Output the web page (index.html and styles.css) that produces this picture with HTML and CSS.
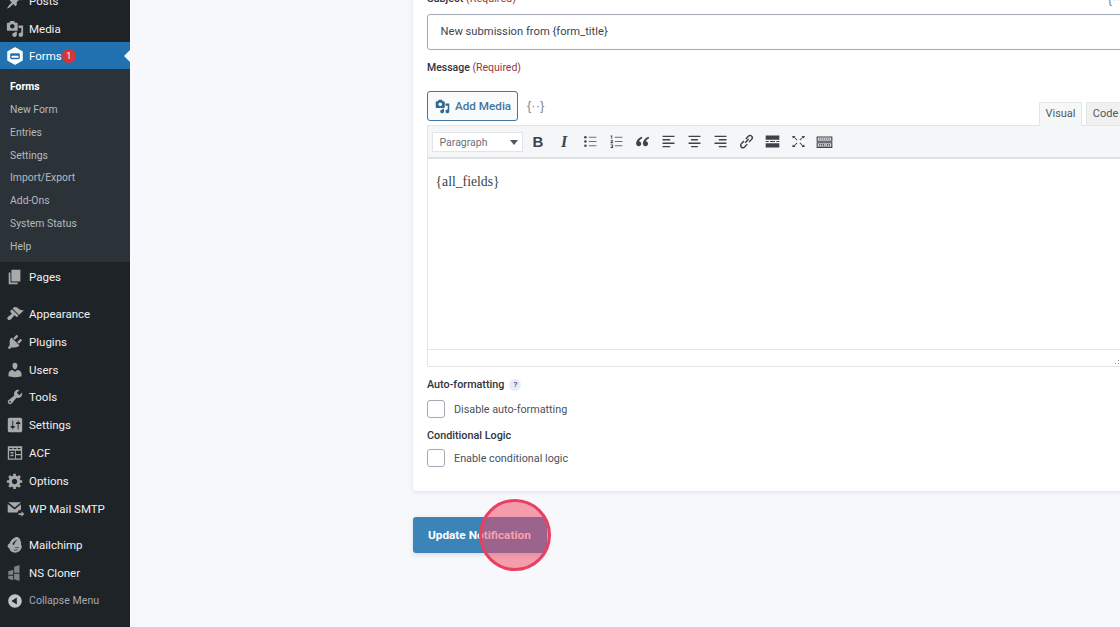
FILE: index.html
```html
<!DOCTYPE html>
<html lang="en">
<head>
<meta charset="utf-8">
<title>Edit notification</title>
<link rel="stylesheet" href="styles.css">
</head>
<body>
<div class="app">
  <nav class="sidebar">
    <ul class="menu">
      <li class="item"><svg class="ico" viewBox="0 0 20 20"><path d="M10.44 3.02l1.82-1.82 6.36 6.35-1.83 1.82c-1.05-.68-2.48-.57-3.41.36l-.75.75c-.92.93-1.04 2.35-.35 3.41l-1.83 1.82-2.41-2.41-2.8 2.79c-.42.42-3.38 2.71-3.8 2.29s1.86-3.39 2.28-3.81l2.79-2.79L4.1 9.36l1.83-1.82c1.05.69 2.48.57 3.4-.36l.75-.75c.93-.92 1.05-2.35.36-3.41z"/></svg>Posts</li>
      <li class="item"><svg class="ico" viewBox="0 0 20 20"><path fill-rule="evenodd" d="M13 11V4c0-.55-.45-1-1-1h-1.67L9 1H5L3.67 3H2c-.55 0-1 .45-1 1v7c0 .55.45 1 1 1h10c.55 0 1-.45 1-1zM7 4.5c1.38 0 2.5 1.12 2.5 2.5S8.38 9.5 7 9.5 4.5 8.38 4.5 7 5.62 4.5 7 4.5zM14 6h5v10.5c0 1.38-1.12 2.5-2.5 2.5S14 17.88 14 16.5s1.12-2.5 2.5-2.5c.17 0 .34.02.5.05V9h-3V6zm-4 8.05V13h2v3.5c0 1.38-1.12 2.5-2.5 2.5S7 17.88 7 16.5 8.12 14 9.5 14c.17 0 .34.02.5.05z"/></svg>Media</li>
      <li class="item active">
        <svg class="ico ico-forms" viewBox="0 0 20 20"><path d="M10 1l7.8 4.4v9.2L10 19l-7.8-4.4V5.4z" stroke="#fff" stroke-width="1.6" stroke-linejoin="round"/><rect x="4.6" y="7" width="10.8" height="6.6" rx="1.6" fill="#2271b1"/><rect x="6.2" y="9.6" width="7.6" height="2.4" rx=".6" fill="#fff"/></svg>Forms<span class="badge">1</span>
      </li>
      <li>
        <ul class="submenu">
          <li class="sub current">Forms</li>
          <li class="sub">New Form</li>
          <li class="sub">Entries</li>
          <li class="sub">Settings</li>
          <li class="sub">Import/Export</li>
          <li class="sub">Add-Ons</li>
          <li class="sub">System Status</li>
          <li class="sub">Help</li>
        </ul>
      </li>
      <li class="item"><svg class="ico" viewBox="0 0 20 20"><path d="M6 15V2h10v13H6zm-1 1h8v2H3V5h2v11z"/></svg>Pages</li>
      <li class="item gap"><svg class="ico" viewBox="0 0 20 20"><path d="M14.48 11.06L7.41 3.99l1.5-1.5c.5-.56 2.3-.47 3.51.32 1.21.8 1.43 1.28 2.91 2.1 1.18.64 2.45 1.26 4.45.85zm-.71.71L6.7 4.7 4.93 6.47c-.39.39-.39 1.02 0 1.41l1.06 1.06c.39.39.39 1.03 0 1.42-.6.6-1.43 1.11-2.21 1.69-.35.26-.7.53-1.01.84C1.43 13.23.91 14.96 2 16.06c1.1 1.09 2.83.57 4.18-.77.31-.31.58-.66.84-1.01.58-.78 1.09-1.61 1.69-2.21.39-.39 1.03-.39 1.42 0l1.06 1.06c.39.39 1.02.39 1.41 0z"/></svg>Appearance</li>
      <li class="item"><svg class="ico" viewBox="0 0 20 20"><path d="M13.11 4.36L9.87 7.6 8 5.73l3.24-3.24c.35-.34 1.05-.2 1.56.32.52.51.66 1.21.31 1.55zm-8 1.77l.91-1.12 9.01 9.01-1.19.84c-.71.71-2.63 1.16-3.82 1.16H6.14L4.9 17.26c-.59.59-1.54.59-2.12 0-.59-.58-.59-1.53 0-2.12l1.24-1.24v-3.88c0-1.13.4-3.19 1.09-3.89zm7.26 3.97l3.24-3.24c.34-.35 1.04-.21 1.55.31.52.51.66 1.21.31 1.55l-3.24 3.25z"/></svg>Plugins</li>
      <li class="item"><svg class="ico" viewBox="0 0 20 20"><path d="M10 9.25c-2.27 0-2.73-3.44-2.73-3.44C7 4.02 7.82 2 9.97 2c2.16 0 2.98 2.02 2.71 3.81 0 0-.41 3.44-2.68 3.44zm0 2.57L12.72 10c2.39 0 4.52 2.33 4.52 4.53v2.49s-3.65 1.13-7.24 1.13c-3.65 0-7.24-1.13-7.24-1.13v-2.49c0-2.25 1.94-4.48 4.47-4.48z"/></svg>Users</li>
      <li class="item"><svg class="ico" viewBox="0 0 20 20"><path fill-rule="evenodd" d="M16.68 9.77c-1.34 1.34-3.3 1.67-4.95.99l-5.41 6.52c-.99.99-2.59.99-3.58 0s-.99-2.59 0-3.57l6.52-5.42c-.68-1.65-.35-3.61.99-4.95 1.28-1.28 3.12-1.62 4.72-1.06l-2.89 2.89 2.82 2.82 2.86-2.87c.53 1.58.18 3.39-1.08 4.65zM3.81 16.21c.4.39 1.04.39 1.43 0 .4-.4.4-1.04 0-1.43-.39-.4-1.03-.4-1.43 0-.39.39-.39 1.03 0 1.43z"/></svg>Tools</li>
      <li class="item"><svg class="ico" viewBox="0 0 20 20"><path fill-rule="evenodd" d="M18 16V4c0-1.1-.9-2-2-2H4c-1.1 0-2 .9-2 2v12c0 1.1.9 2 2 2h12c1.1 0 2-.9 2-2zM8 11h1c.55 0 1 .45 1 1s-.45 1-1 1H8v1.5c0 .28-.22.5-.5.5s-.5-.22-.5-.5V13H6c-.55 0-1-.45-1-1s.45-1 1-1h1V5.5c0-.28.22-.5.5-.5s.5.22.5.5V11zm5-2h-1c-.55 0-1-.45-1-1s.45-1 1-1h1V5.5c0-.28.22-.5.5-.5s.5.22.5.5V7h1c.55 0 1 .45 1 1s-.45 1-1 1h-1v5.5c0 .28-.22.5-.5.5s-.5-.22-.5-.5V9z"/></svg>Settings</li>
      <li class="item"><svg class="ico" viewBox="0 0 20 20"><path fill-rule="evenodd" d="M2 2.500h16v15H2zM4 4.500v1h3v-1zM8.500 4.500v1h3v-1zM13 4.500v1h3v-1zM3.500 7.500v8.500h6.500V7.500zM11 7.500v3.500h5.500V7.500zM11 12.500V16h5.500v-3.500z"/><path d="M5 9h3.500v1.500H5zM5 12h3.500v1.500H5z"/></svg>ACF</li>
      <li class="item"><svg class="ico" viewBox="0 0 20 20"><path fill-rule="evenodd" d="M18 12h-2.18c-.17.7-.44 1.35-.81 1.93l1.54 1.54-2.1 2.1-1.54-1.54c-.58.36-1.23.63-1.91.79V19H8v-2.18c-.68-.16-1.33-.43-1.91-.79l-1.54 1.54-2.12-2.12 1.54-1.54c-.36-.58-.63-1.23-.79-1.91H1V9.03h2.17c.16-.7.44-1.35.8-1.94L2.43 5.55l2.1-2.1 1.54 1.54c.58-.37 1.24-.64 1.93-.81V2h3v2.18c.68.16 1.33.43 1.91.79l1.54-1.54 2.12 2.12-1.54 1.54c.36.59.64 1.24.8 1.94H18V12zm-8.5 1.5c1.66 0 3-1.34 3-3s-1.34-3-3-3-3 1.34-3 3 1.34 3 3 3z"/></svg>Options</li>
      <li class="item"><svg class="ico" viewBox="0 0 20 20"><path d="M2.5 2.500h14.200L9.600 8.400zM1.900 4.400L9.600 10.600l7-5.900v6.200c-2.400 0-3.600 1.200-3.800 3.100H1.900z"/><path d="M14 14.600h3.200v-2l3 3-3 3v-2H14z"/></svg>WP Mail SMTP</li>
      <li class="item gap"><svg class="ico" viewBox="0 0 20 20"><path fill-rule="evenodd" d="M10.500 1.500c1.800-.8 3.200-.3 3.700.8.900.3 1.500 1 1.500 2.100 1.100 1.500 1.400 3.700 1 5.400.9.900 1.100 2.200.6 3.300-.9 3.300-3.800 5.400-7 5.400-3.600 0-6.200-2.100-6.700-4.900-1.300-.4-2-1.600-1.700-3 .3-1.300 1.200-2.100 2-2.400C4.900 5.300 7.600 2.800 10.500 1.500zM7 9c1.500-2.600 3.800-4.300 6-5-2 1.700-3.500 3.600-4.200 6.200zM9 12.500c1.600 1.700 4.500 1.500 5.700-.5-1.700 1-3.700 1-5.700.5zM7.500 15c1.800 1.500 4.700 1.500 6.300-.3-2 .8-4.300.9-6.300.3z"/></svg>Mailchimp</li>
      <li class="item"><svg class="ico ico-cloner" viewBox="0 0 20 20"><path d="M2.500 8l5.500-1.500V12H2.500zM2.500 13h5.500v5L2.500 16.500zM9 3l6-2v8.800H9zM9 10.800h6V19l-6-2z"/></svg>NS Cloner</li>
      <li class="item collapse"><svg class="ico ico-collapse" viewBox="0 0 20 20"><path fill-rule="evenodd" d="M10 2.500c-4.140 0-7.500 3.360-7.500 7.500s3.360 7.500 7.500 7.500 7.500-3.360 7.500-7.500-3.360-7.500-7.500-7.500zm2 3.500v8l-6-4z"/></svg>Collapse Menu</li>
    </ul>
  </nav>

  <main class="main">
    <section class="card">
      <div class="label-row">
        <label class="label">Subject <span class="req">(Required)</span></label>
        <span class="merge">{··}</span>
      </div>
      <div class="input">New submission from {form_title}</div>

      <label class="label label-message">Message <span class="req">(Required)</span></label>

      <div class="media-row">
        <div class="media-left">
          <button class="add-media" type="button">
            <svg class="media-ico" viewBox="0 0 20 20"><path fill-rule="evenodd" d="M13 11V4c0-.55-.45-1-1-1h-1.670L9 1H5L3.670 3H2c-.55 0-1 .45-1 1v7c0 .55.45 1 1 1h10c.55 0 1-.45 1-1zM7 4.500c1.380 0 2.500 1.120 2.500 2.500S8.380 9.500 7 9.500 4.500 8.380 4.500 7 5.620 4.500 7 4.500zM14 6h5v10.500c0 1.380-1.120 2.500-2.500 2.500S14 17.880 14 16.500s1.120-2.500 2.500-2.500c.170 0 .340.020.500.050V9h-3V6zm-4 8.050V13h2v3.500c0 1.380-1.120 2.500-2.500 2.500S7 17.880 7 16.500 8.120 14 9.500 14c.170 0 .340.020.500.050z"/></svg>
            Add Media
          </button>
          <span class="merge">{··}</span>
        </div>
        <div class="tabs">
          <span class="tab tab-on">Visual</span>
          <span class="tab">Code</span>
        </div>
      </div>

      <div class="editor">
        <div class="toolbar">
          <div class="format">Paragraph<span class="caret"></span></div>
          <span class="tb tb-b">B</span>
          <span class="tb tb-i">I</span>
          <span class="tb"><svg class="tbi" viewBox="0 0 20 20"><g class="ln ln-thin"><path d="M8 5h9M8 10h9M8 15h9"/></g><circle cx="4" cy="5" r="1.500"/><circle cx="4" cy="10" r="1.500"/><circle cx="4" cy="15" r="1.500"/></svg></span>
          <span class="tb"><svg class="tbi" viewBox="0 0 20 20"><g class="ln ln-thin"><path d="M8 5h9M8 10h9M8 15h9"/></g><path d="M3 3h2v4H4V4H3zM3 8.500h3v1L4.400 11H6v1H3v-1l1.700-1.500H3zM3 13.500h3v4H3v-1h2v-.5H3.800v-.8H5v-.7H3z"/></svg></span>
          <span class="tb"><svg class="tbi" viewBox="0 0 20 20"><path d="M9.500 4.500C6 5.500 3 8 2.500 11.500c-.3 2.300 1 4 3 4 1.800 0 3-1.200 3-2.900 0-1.600-1.100-2.700-2.600-2.800.5-1.400 1.900-2.700 3.600-3.400zM17.500 4.500C14 5.500 11 8 10.500 11.500c-.3 2.300 1 4 3 4 1.800 0 3-1.200 3-2.900 0-1.600-1.100-2.700-2.600-2.800.5-1.400 1.900-2.700 3.600-3.400z"/></svg></span>
          <span class="tb"><svg class="tbi" viewBox="0 0 20 20"><g class="ln"><path d="M3 4h14M3 8h9M3 12h14M3 16h9"/></g></svg></span>
          <span class="tb"><svg class="tbi" viewBox="0 0 20 20"><g class="ln"><path d="M3 4h14M6 8h8M3 12h14M6 16h8"/></g></svg></span>
          <span class="tb"><svg class="tbi" viewBox="0 0 20 20"><g class="ln"><path d="M3 4h14M8 8h9M3 12h14M8 16h9"/></g></svg></span>
          <span class="tb"><svg class="tbi" viewBox="0 0 20 20"><g class="chain"><path d="M8.500 11.500l4-4.500"/><path d="M7 9.500l-3 3.200c-1.200 1.300-1 3 0 3.900s2.700 1 3.800-.2l3-3.300"/><path d="M9.200 7l3-3.300c1.200-1.200 2.900-1 3.900 0s1 2.600-.1 3.800l-3 3.200"/></g></svg></span>
          <span class="tb"><svg class="tbi" viewBox="0 0 20 20"><path d="M2 3h16v5H2zM2 12h16v5H2zM2 9.400h3.500v1.300H2zM7 9.400h6v1.300H7zM14.500 9.400H18v1.300h-3.500z"/></svg></span>
          <span class="tb"><svg class="tbi" viewBox="0 0 20 20"><path d="M2.500 3.500h4L5.300 4.700 8.800 8 8 8.800 4.700 5.300 3.500 6.500zM17.500 3.500h-4l1.200 1.200-3.500 3.300.8.800 3.300-3.500 1.200 1.200zM2.500 16.500h4l-1.200-1.200 3.500-3.300-.8-.8-3.300 3.500-1.200-1.200zM17.500 16.500h-4l1.200-1.200-3.500-3.300.8-.8 3.300 3.500 1.200-1.200z"/></svg></span>
          <span class="tb tb-wide"><svg class="tbk" viewBox="0 0 22 18"><path class="kb" d="M1.500 2.500h19v5.500h-19zM1.500 10h19v6h-19z"/><path class="kd" d="M4 5.200h14M4 12.200h8M14 12.200h4M4 14h14"/></svg></span>
        </div>
        <div class="editor-body">{all_fields}</div>
        <div class="editor-status"><svg class="grip" viewBox="0 0 8 8"><path d="M7 1v1H6V1zM7 4v1H6V4zM4 4v1H3V4zM7 7v1H6V7zM4 7v1H3V7zM1 7v1H0V7z"/></svg></div>
      </div>

      <div class="label label-auto">Auto-formatting <span class="help">?</span></div>
      <label class="check"><span class="box"></span>Disable auto-formatting</label>
      <div class="label label-cond">Conditional Logic</div>
      <label class="check check-tight"><span class="box"></span>Enable conditional logic</label>
    </section>

    <button class="update" type="button">Update Notification<span class="spot"></span></button>
  </main>
</div>
</body>
</html>
```

FILE: styles.css
```css
* { box-sizing: border-box; }
html, body { margin: 0; padding: 0; height: 100%; }
body {
  background: #f6f8fc;
  font-family: Roboto, "Noto Sans", sans-serif;
  font-size: 11.5px;
  color: #3b3f4a;
  overflow: hidden;
}
ul { list-style: none; margin: 0; padding: 0; }
.app { display: flex; height: 627px; overflow: hidden; }

/* sidebar */
.sidebar { width: 130px; flex: none; background: #1d2327; height: 627px; overflow: hidden; }
.menu { margin-top: -14px; }
.item {
  position: relative;
  display: flex;
  align-items: center;
  height: 27.8px;
  padding: 2px 0 0 6px;
  color: #f0f0f1;
  font-size: 11.5px;
  white-space: nowrap;
}
.item.gap { margin-top: 9px; }
.ico { width: 18px; height: 18px; margin-right: 5px; flex: none; fill: #a7aaad; }
.active { background: #2271b1; color: #fff; }
.active::after {
  content: "";
  position: absolute;
  right: 0;
  top: 8px;
  border: 6px solid transparent;
  border-right-color: #f6f8fc;
  border-left-width: 0;
}
.ico-forms { fill: #fff; }
.ico-cloner { fill: #7c8287; }
.ico-collapse { fill: #c3c4c7; }
.badge {
  width: 14px;
  height: 14px;
  margin-left: 0;
  border-radius: 50%;
  background: #d63638;
  color: #fff;
  font-size: 9px;
  line-height: 14px;
  text-align: center;
}
.submenu { background: #2c3338; padding: 5.5px 0 4.3px; }
.sub { height: 22.9px; padding: 1px 0 0 10px; line-height: 22.9px; color: #b4b9be; font-size: 10.4px; white-space: nowrap; }
.sub.current { color: #fff; font-weight: 700; }
.collapse { color: #a7aaad; font-size: 10.6px; }

/* main */
.main { flex: 1; min-width: 0; padding-left: 283px; }
.card {
  width: 726px;
  margin-top: -20px;
  padding: 12px 14px 24px;
  background: #fff;
  border-radius: 3px;
  box-shadow: 0 1px 4px rgba(40, 50, 80, .12);
}
.label-row { display: flex; justify-content: space-between; align-items: center; height: 14px; margin-bottom: 8px; }
.label { font-size: 10.8px; font-weight: 500; color: #2f3340; line-height: 14px; }
.req { color: #99343d; font-weight: 400; }
.merge { color: #7f8a99; font-size: 13px; line-height: 14px; font-family: "Liberation Sans", sans-serif; }
.input {
  height: 36px;
  padding-left: 12.500px;
  border: 1px solid #a4a9b3;
  border-radius: 3px;
  font-size: 11.2px;
  line-height: 34px;
  color: #3f4450;
}
.label-message { display: block; margin-top: 11px; font-size: 10.5px; }
.media-row { display: flex; justify-content: space-between; align-items: flex-end; height: 48px; margin-top: 2px; padding-top: 14px; }
.media-left { display: flex; align-items: center; align-self: flex-start; }
.add-media {
  display: flex;
  align-items: center;
  width: 91px;
  height: 30px;
  padding: 0 0 0 7px;
  border: 1px solid #44769b;
  border-radius: 3px;
  background: #f8fafc;
  color: #44769b;
  font: 500 11.7px Roboto, sans-serif;
  white-space: nowrap;
}
.media-ico { width: 15px; height: 15px; margin-right: 5px; fill: #2f6a8d; }
.media-left .merge { margin-left: 9px; margin-top: -1px; }
.tabs { display: flex; gap: 4px; margin-bottom: -1px; position: relative; }
.tab {
  width: 39px;
  height: 24px;
  border: 1px solid #e4e6e8;
  background: #f0f0f1;
  color: #50575e;
  font-size: 11px;
  line-height: 22px;
  text-align: center;
}
.tab-on { width: 43px; background: #f6f7f7; border-bottom-color: #f6f7f7; }
.editor { border: 1px solid #e2e4e7; border-top: 0; }
.toolbar {
  display: flex;
  align-items: center;
  height: 34px;
  padding-left: 4px;
  background: #f5f6f7;
  border-top: 1px solid #e2e4e7;
  border-bottom: 2px solid #dfe1e3;
}
.format {
  position: relative;
  width: 91px;
  height: 20px;
  margin-right: 2px;
  padding-left: 6.500px;
  background: #fff;
  border: 1px solid #e2e4e7;
  font-size: 10.5px;
  line-height: 19px;
  color: #6c7179;
}
.caret {
  position: absolute;
  right: 4px;
  top: 7px;
  border: 4px solid transparent;
  border-top: 5px solid #50575e;
  border-bottom: 0;
}
.tb {
  display: flex;
  align-items: center;
  justify-content: center;
  width: 26px;
  height: 26px;
  color: #3c434a;
}
.tb-b { font: 700 15px "Liberation Sans", sans-serif; }
.tb-i { font: italic 700 16px "Liberation Serif", serif; }
.tbi { width: 17px; height: 17px; fill: #3c434a; }
.tbk { width: 17px; height: 14px; }
.kb { fill: #d8dadc; stroke: #3c434a; stroke-width: 1.4; }
.kd { fill: none; stroke: #3c434a; stroke-width: 1.2; stroke-dasharray: 1.500 1; }
.ln path { fill: none; stroke: #3c434a; stroke-width: 1.7; }
.ln-thin path { stroke: #6b7076; stroke-width: 1.3; }
.chain path { fill: none; stroke: #3c434a; stroke-width: 1.7; }
.editor-body {
  height: 190px;
  padding: 14px 7.500px;
  font: 13.7px/18px "Liberation Serif", serif;
  color: #3a3f46;
}
.editor-status { display: flex; align-items: flex-end; justify-content: flex-end; height: 17px; border-top: 1px solid #e2e4e7; }
.grip { width: 8px; height: 8px; margin: 0 1px 2px 0; fill: #8c8f94; }
.label-auto { display: flex; align-items: center; gap: 5px; margin-top: 11px; }
.help {
  width: 12px;
  height: 12px;
  border-radius: 50%;
  background: #e8ebf7;
  color: #3b4a7a;
  font-size: 8px;
  line-height: 12px;
  text-align: center;
}
.check { display: flex; align-items: center; height: 18px; margin-top: 8px; font-size: 10.8px; color: #4b5160; }
.check-tight { margin-top: 6px; }
.box {
  width: 18px;
  height: 18px;
  margin-right: 9px;
  background: #fff;
  border: 1px solid #a4a9b3;
  border-radius: 3px;
}
.label-cond { margin-top: 11px; }
.update {
  position: relative;
  display: block;
  width: 134px;
  height: 36px;
  margin-top: 26px;
  padding: 0;
  border: 0;
  border-radius: 3px;
  background: #3a84b8;
  color: #fff;
  font: 700 11.8px Roboto, sans-serif;
  text-align: left;
  text-indent: 15px;
  box-shadow: 0 2px 5px rgba(40, 60, 90, .15);
}
.spot {
  position: absolute;
  left: 66px;
  top: -18px;
  width: 72px;
  height: 72px;
  border: 3.500px solid #e8405f;
  border-radius: 50%;
  background: rgba(243, 70, 100, .52);
}
```
